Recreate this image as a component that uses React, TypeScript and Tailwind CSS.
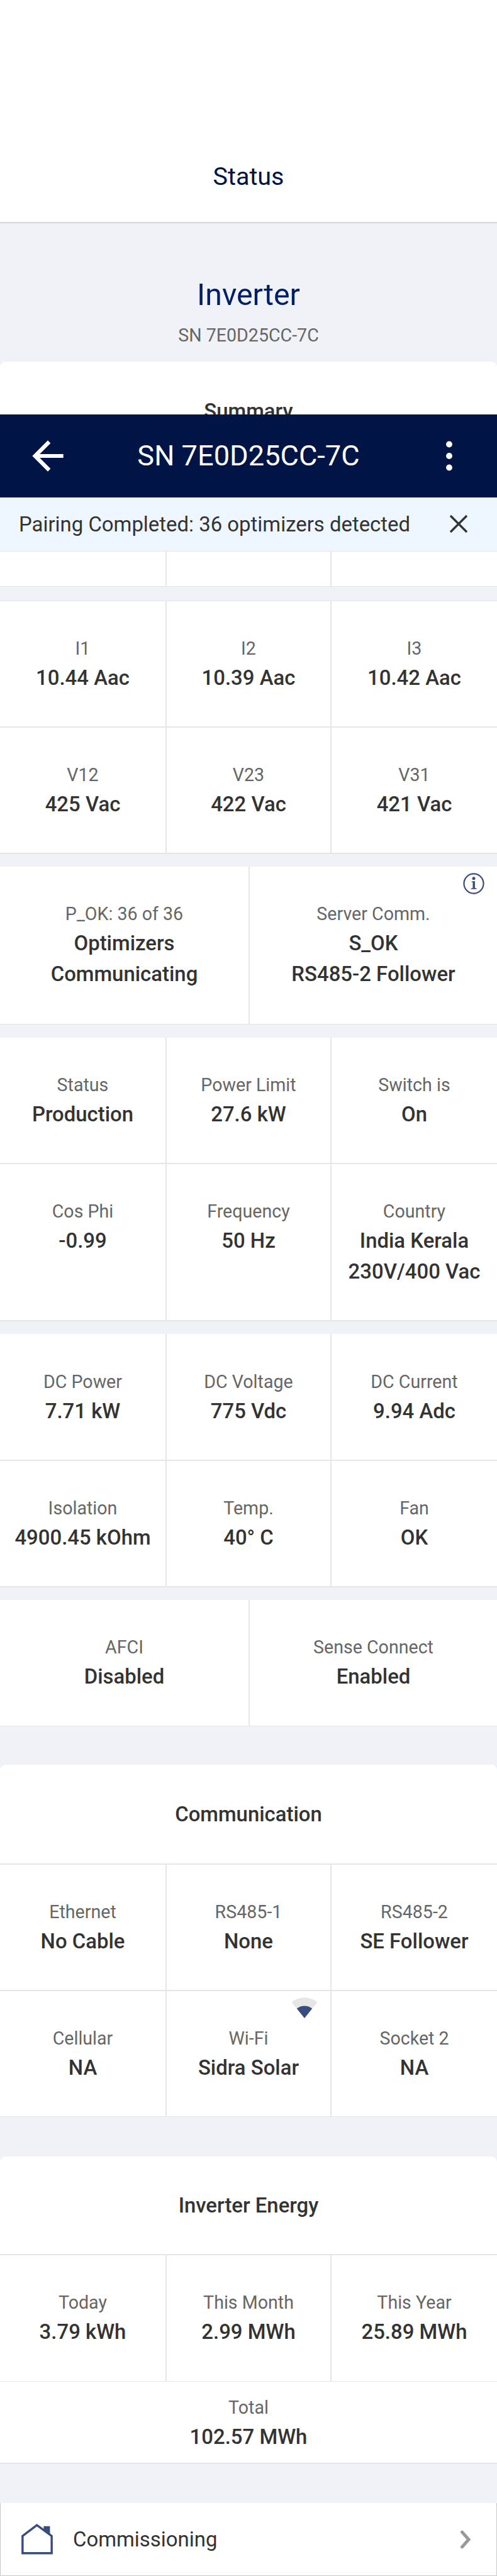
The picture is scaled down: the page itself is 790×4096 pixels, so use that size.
import type { ReactNode } from "react";

type Item = { label: string; value: string[]; icon?: ReactNode };

function InfoIcon() {
  return (
    <svg className="absolute right-[20px] top-[10px] h-[34px] w-[34px]" viewBox="0 0 46 46" fill="none">
      <circle cx="23" cy="23" r="21" stroke="#384c7e" strokeWidth="3" />
      <circle cx="23" cy="11.7" r="3.4" fill="#384c7e" />
      <path d="M18.3 18.2 L25.6 17.6 V32.6 L29.4 33.2 V34.8 H17.2 V33.2 L20.9 32.6 V19.8 L18.3 19.5 Z" fill="#384c7e" />
    </svg>
  );
}

function WifiIcon() {
  return (
    <svg className="absolute right-[20px] top-[10px] h-[33px] w-[42px]" viewBox="0 0 57.4 45.1" fill="none">
      <path d="M28.7 45 L0.6 10.4 A44.7 44.7 0 0 1 56.8 10.4 Z" fill="#e6e6e6" />
      <path d="M28.7 45 L12 24.2 A26.7 26.7 0 0 1 45.4 24.2 Z" fill="#384c7e" />
    </svg>
  );
}

function Line() {
  return <div className="h-[1.46px] w-full shrink-0 bg-[#e6e6e6]" />;
}

function Texts({ item }: { item: Item }) {
  return (
    <>
      <div className="text-[28.6px] leading-[44px] text-[#666666]">{item.label}</div>
      {item.value.map((v) => (
        <div key={v} className="whitespace-nowrap text-[32.9px] font-medium leading-[49px] text-[#333333]">
          {v}
        </div>
      ))}
    </>
  );
}

function Row({ items, height = "h-[199.7px]" }: { items: Item[]; height?: string }) {
  const three = items.length === 3;
  const borders = three ? ["border-r-2", "", "border-l-2"] : ["", "border-l-2"];
  return (
    <>
      <div className={`grid bg-white ${height} ${three ? "grid-cols-[265px_1fr_265px]" : "grid-cols-2"}`}>
        {items.map((item, i) => (
          <div key={item.label} className={`relative pt-[53.2px] text-center border-[#e6e6e6] ${borders[i]}`}>
            {item.icon}
            <Texts item={item} />
          </div>
        ))}
      </div>
      <Line />
    </>
  );
}

function CardTitle({ children, height }: { children: ReactNode; height: string }) {
  return (
    <>
      <div className={`flex items-center justify-center rounded-t-[9px] bg-white text-[32.9px] font-medium text-[#333333] ${height}`}>
        {children}
      </div>
      <Line />
    </>
  );
}

const one = (label: string, ...value: string[]): Item => ({ label, value });

export default function App() {
  return (
    <div className="flex h-[4096px] w-[790px] flex-col overflow-hidden bg-[#f0f2f8] font-['Roboto',sans-serif]">
      <header className="flex h-[352.6px] shrink-0 justify-center bg-white pt-[257px] text-[39.5px] leading-[48px] text-[#001446]">
        Status
      </header>
      <div className="h-[1.46px] shrink-0 bg-[#cccccc]" />
      <div className="h-[1.46px] shrink-0 bg-[#e4e5e9]" />

      <div className="flex h-[219.4px] shrink-0 flex-col items-center pt-[83px]">
        <div className="text-[48.3px] leading-[60px] text-[#001f66]">Inverter</div>
        <div className="mt-[12px] text-[28.6px] leading-[45px] text-[#666666]">SN 7E0D25CC-7C</div>
      </div>

      <div className="flex h-[84.3px] shrink-0 justify-center overflow-hidden rounded-t-[9px] bg-white pt-[54px] text-[32.9px] font-medium leading-[49px] text-[#333333]">
        Summary
      </div>

      <nav className="flex h-[131.6px] shrink-0 items-center justify-between bg-[#001446] text-white">
        <svg className="ml-[39px] h-[74px] w-[74px]" viewBox="0 0 24 24" fill="currentColor">
          <path d="M20 11H7.83l5.59-5.59L12 4l-8 8 8 8 1.41-1.41L7.83 13H20v-2z" />
        </svg>
        <div className="text-[45.2px] leading-[60px]">SN 7E0D25CC-7C</div>
        <svg className="mr-[39px] h-[74px] w-[74px]" viewBox="0 0 24 24" fill="currentColor">
          <circle cx="12" cy="6" r="1.6" />
          <circle cx="12" cy="12" r="1.6" />
          <circle cx="12" cy="18" r="1.6" />
        </svg>
      </nav>

      <div className="flex h-[84.9px] shrink-0 items-center justify-between bg-[#eef6ff] pl-[30px] pr-[46px] text-[32.9px] text-[#333333]">
        <span>Pairing Completed: 36 optimizers detected</span>
        <svg className="h-[30px] w-[30px]" viewBox="0 0 30 30" fill="none" stroke="#333333" strokeWidth="3.4">
          <path d="M2 2 L28 28 M28 2 L2 28" />
        </svg>
      </div>
      <Line />

      <div className="grid h-[54.9px] shrink-0 grid-cols-[265px_1fr_265px] bg-white">
        <div className="border-r-2 border-[#e6e6e6]" />
        <div />
        <div className="border-l-2 border-[#e6e6e6]" />
      </div>
      <Line />
      <div className="h-[21.2px] shrink-0" />
      <Line />

      <Row height="h-[199px]" items={[one("I1", "10.44 Aac"), one("I2", "10.39 Aac"), one("I3", "10.42 Aac")]} />
      <Row items={[one("V12", "425 Vac"), one("V23", "422 Vac"), one("V31", "421 Vac")]} />
      <div className="h-[20.5px] shrink-0" />

      <Row
        height="h-[249.4px]"
        items={[
          one("P_OK: 36 of 36", "Optimizers", "Communicating"),
          { label: "Server Comm.", value: ["S_OK", "RS485-2 Follower"], icon: <InfoIcon /> },
        ]}
      />
      <div className="h-[20.5px] shrink-0" />

      <Row items={[one("Status", "Production"), one("Power Limit", "27.6 kW"), one("Switch is", "On")]} />
      <Row
        height="h-[248.8px]"
        items={[one("Cos Phi", "-0.99"), one("Frequency", "50 Hz"), one("Country", "India Kerala", "230V/400 Vac")]}
      />
      <div className="h-[20.5px] shrink-0" />

      <Row items={[one("DC Power", "7.71 kW"), one("DC Voltage", "775 Vdc"), one("DC Current", "9.94 Adc")]} />
      <Row items={[one("Isolation", "4900.45 kOhm"), one("Temp.", "40° C"), one("Fan", "OK")]} />
      <div className="h-[20.5px] shrink-0" />

      <Row items={[one("AFCI", "Disabled"), one("Sense Connect", "Enabled")]} />
      <div className="h-[61.1px] shrink-0" />

      <CardTitle height="h-[156.9px]">Communication</CardTitle>
      <Row items={[one("Ethernet", "No Cable"), one("RS485-1", "None"), one("RS485-2", "SE Follower")]} />
      <Row
        height="h-[199px]"
        items={[one("Cellular", "NA"), { label: "Wi-Fi", value: ["Sidra Solar"], icon: <WifiIcon /> }, one("Socket 2", "NA")]}
      />
      <div className="h-[62.2px] shrink-0" />

      <CardTitle height="h-[155.8px]">Inverter Energy</CardTitle>
      <Row items={[one("Today", "3.79 kWh"), one("This Month", "2.99 MWh"), one("This Year", "25.89 MWh")]} />
      <div className="h-[129.5px] shrink-0 bg-white pt-[18.8px] text-center">
        <Texts item={one("Total", "102.57 MWh")} />
      </div>
      <Line />
      <div className="h-[62.2px] shrink-0" />

      <div className="flex grow items-center border border-t-0 border-[#c8c8c8] bg-white pl-[33px] pr-[40px]">
        <svg className="h-[49px] w-[50px]" viewBox="0 0 67 66" fill="none">
          <path d="M2.3 26 L33 3 L64.7 26 V63 H2.3 Z" stroke="#384c7e" strokeWidth="4.6" />
          <path d="M47.5 5 H61 V25 L47.5 14 Z" fill="#384c7e" />
        </svg>
        <span className="ml-[32px] grow text-[32.9px] text-[#333333]">Commissioning</span>
        <svg className="h-[30px] w-[18px]" viewBox="0 0 18 30" fill="none" stroke="#999999" strokeWidth="5" strokeLinecap="round">
          <path d="M3.5 3.2 L14 15 L3.5 26.8" />
        </svg>
      </div>
    </div>
  );
}
